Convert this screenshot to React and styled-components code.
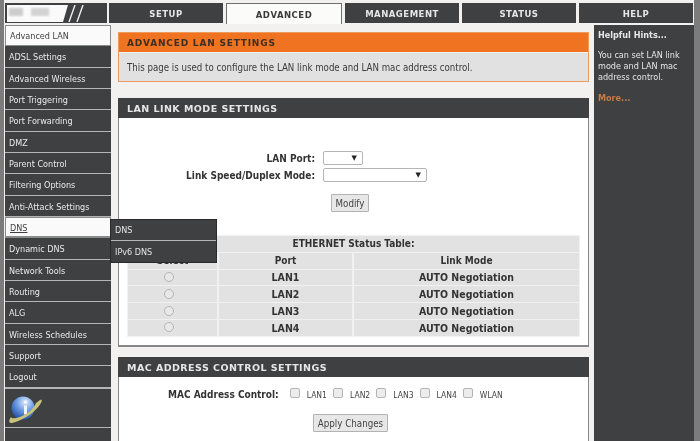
import React from 'react';
import styled, { createGlobalStyle } from 'styled-components';

const GlobalStyle = createGlobalStyle`
    html, body {
        margin: 0;
        padding: 0;
        height: 100%;
        overflow: hidden;
        background: #f3f1ef;
    }
`
const Page = styled.div`
    position: relative;
    width: 700px;
    height: 441px;
    overflow: hidden;
    box-sizing: border-box;
    padding: 3px 0 0 5px;
    background: linear-gradient(to right, #7c7c7c 4px, #f3f1ef 4px, #f3f1ef 694px, #7c7c7c 694px);
    font-family: "DejaVu Sans", Verdana, sans-serif;
    color: #2b2b2b;
    filter: blur(0.3px);
`
const TopBar = styled.div`
    display: flex;
    height: 20px;
    margin-right: 7px;
`
const Logo = styled.div`
    width: 102px;
    margin-right: 2px;
    display: flex;
    align-items: center;
    box-sizing: border-box;
    border: 2px solid #3e4041;
    border-bottom-width: 1px;
    background: #3e4041;
    overflow: hidden;
`
const LogoSvg = styled.svg`
    display: block;
`
const Tabs = styled.div`
    display: flex;
    flex: 1;
    gap: 3px;
`
const Tab = styled.div`
    flex: 1;
    display: flex;
    align-items: center;
    justify-content: center;
    box-sizing: border-box;
    height: ${p => p.$active ? '21px' : '20px'};
    padding-top: 2px;
    background: ${p => p.$active ? '#fbfbfa' : '#3e4041'};
    border: ${p => p.$active ? '1px solid #6d6f70' : 'none'};
    border-bottom: none;
    color: ${p => p.$active ? '#3a3a3a' : '#e6e6e6'};
    font-size: 8.5px;
    font-weight: bold;
    letter-spacing: 0.5px;
    position: relative;
    z-index: 1;
`
const Body = styled.div`
    display: flex;
    margin-top: 2px;
`
const Sidebar = styled.div`
    width: 106px;
    height: 416px;
    flex-shrink: 0;
    background: #3e4041;
`
const MenuItem = styled.div`
    box-sizing: border-box;
    height: 21.33px;
    display: flex;
    align-items: center;
    padding: ${p => p.$first ? '0' : '2px'} 0 0 4px;
    background: ${p => p.$active ? '#fafafa' : '#3e4041'};
    border-bottom: 1px solid #b4b6b6;
    border: ${p => p.$active ? '1px solid #8a8c8c' : undefined};
    border-bottom-width: ${p => p.$link ? '2px' : '1px'};
    color: ${p => p.$active ? '#3f3f3f' : '#e9e9e9'};
    text-decoration: ${p => p.$link ? 'underline' : 'none'};
    font-size: 9px;
    font-family: "DejaVu Sans Condensed", "DejaVu Sans", sans-serif;
    font-stretch: condensed;
    white-space: nowrap;
`
const IconSlot = styled.div`
    box-sizing: border-box;
    height: 40px;
    padding: 6px 0 0 4px;
    border-bottom: 1px solid #b4b6b6;
    border-top: 1px solid #b4b6b6;
`
const Main = styled.div`
    width: 471px;
    padding: 7px 0 0 7px;
    flex-shrink: 0;
`
const Intro = styled.div`
    box-sizing: border-box;
    height: 50px;
    border: 1px solid #ee9a5c;
    background: #e1e1e1;
`
const IntroTitle = styled.div`
    height: 19px;
    display: flex;
    align-items: center;
    padding-left: 8px;
    background: #ef7320;
    border-bottom: 1px solid #f3f1ef;
    color: #3a3026;
    font-size: 9px;
    font-weight: bold;
    letter-spacing: 0.8px;
`
const IntroText = styled.div`
    height: 29px;
    display: flex;
    align-items: center;
    padding-left: 8px;
    font-family: "DejaVu Sans Condensed", "DejaVu Sans", sans-serif;
    font-size: 9.65px;
    color: #3a3a3a;
`
const Section = styled.section`
    margin-top: ${p => p.$gap}px;
    box-sizing: border-box;
    height: ${p => p.$height}px;
    background: #fff;
    border: solid #85878a;
    border-width: 0 1px 2px 1px;
`
const SectionTitle = styled.div`
    height: 20px;
    margin: 0 -1px;
    display: flex;
    align-items: center;
    padding-left: 9px;
    background: #3e4041;
    color: #e6e6e6;
    font-size: 9.5px;
    font-weight: bold;
    letter-spacing: 0.45px;
`
const FormRows = styled.div`
    padding-top: 33px;
    display: grid;
    grid-template-columns: 196px 1fr;
    row-gap: 3px;
    align-items: center;
`
const Label = styled.div`
    justify-self: end;
    font-family: "DejaVu Sans Condensed", "DejaVu Sans", sans-serif;
    font-size: 10px;
    font-weight: bold;
    color: #333;
`
const Select = styled.div`
    box-sizing: border-box;
    margin-left: 8px;
    width: ${p => p.$width}px;
    height: 14px;
    background: #fff;
    border: 1px solid #b5b5b5;
    border-radius: 2px;
    display: flex;
    align-items: center;
    justify-content: flex-end;
    padding-right: 5px;
    color: #222;
    font-size: 7px;
`
const ButtonRow = styled.div`
    display: flex;
    justify-content: center;
    margin: ${p => p.$top}px ${p => p.$right}px 0 0;
`
const Button = styled.div`
    box-sizing: border-box;
    height: 18px;
    padding: 0 ${p => p.$pad}px;
    display: flex;
    align-items: center;
    background: #e7e7e7;
    border: 1px solid #b2b2b2;
    border-radius: 1px;
    color: #444;
    font-family: "DejaVu Sans Condensed", "DejaVu Sans", sans-serif;
    font-size: 9.7px;
`
const StatusTable = styled.div`
    margin: 23px 8px 0 8px;
    display: grid;
    grid-template-columns: 89px 133px 1fr;
    gap: 1px 2px;
    padding: 1px;
    background: #f1f1f1;
`
const Cell = styled.div`
    grid-column: ${p => p.$span ? '1 / -1' : 'auto'};
    height: 15.8px;
    display: flex;
    align-items: center;
    justify-content: center;
    background: #e2e2e2;
    color: #333;
    font-family: "DejaVu Sans Condensed", "DejaVu Sans", sans-serif;
    font-size: ${p => p.$head ? '10' : '10.5'}px;
    font-weight: bold;
`
const Radio = styled.span`
    box-sizing: border-box;
    width: 10px;
    height: 10px;
    margin: 0 7px 1px 0;
    border-radius: 50%;
    border: 1px solid #b4b4b4;
    background: #e8e8e8;
`
const MacRow = styled.div`
    display: flex;
    align-items: center;
    padding: 11px 0 0 49px;
`
const MacLabel = styled(Label)`
    margin-right: 11px;
`
const Check = styled.span`
    box-sizing: border-box;
    width: 10px;
    height: 10px;
    margin-top: -3px;
    border: 1px solid #b5b5b5;
    border-radius: 2px;
    background: #ececec;
`
const CheckText = styled.span`
    width: 26.3px;
    padding: 2px 0 0 7px;
    font-family: "DejaVu Sans Condensed", "DejaVu Sans", sans-serif;
    font-size: 8.5px;
    color: #444;
`
const Hints = styled.aside`
    box-sizing: border-box;
    width: 100px;
    height: 416px;
    margin: 0 0 0 5px;
    padding: 5px 4px;
    background: #3e4041;
    color: #e6e6e6;
    font-family: "DejaVu Sans Condensed", "DejaVu Sans", sans-serif;
    font-size: 9px;
    line-height: 11px;
`
const HintTitle = styled.div`
    font-weight: bold;
`
const HintText = styled.div`
    margin-top: 9px;
`
const HintMore = styled.div`
    margin-top: 10px;
    font-weight: bold;
    color: #c77b45;
`
const Flyout = styled.div`
    position: absolute;
    left: 110px;
    top: 219px;
    width: 107px;
    box-sizing: border-box;
    border: 1px solid #2a2a2a;
    background: #3e4041;
    z-index: 2;
`
const FlyoutItem = styled.div`
    box-sizing: border-box;
    height: 21px;
    display: flex;
    align-items: center;
    padding-left: 4px;
    border-bottom: ${p => p.$last ? 'none' : '1px solid #b4b6b6'};
    color: #e4e4e4;
    font-family: "DejaVu Sans Condensed", "DejaVu Sans", sans-serif;
    font-size: 9px;
`

const menu = ['Advanced LAN', 'ADSL Settings', 'Advanced Wireless', 'Port Triggering', 'Port Forwarding', 'DMZ', 'Parent Control', 'Filtering Options', 'Anti-Attack Settings', 'DNS', 'Dynamic DNS', 'Network Tools', 'Routing', 'ALG', 'Wireless Schedules', 'Support', 'Logout'];
const tabs = ['SETUP', 'ADVANCED', 'MANAGEMENT', 'STATUS', 'HELP'];
const ports = ['LAN1', 'LAN2', 'LAN3', 'LAN4'];
const checks = ['LAN1', 'LAN2', 'LAN3', 'LAN4', 'WLAN'];

function LogoMark() {
    return (
        <LogoSvg width="98" height="17" viewBox="0 0 98 17">
            <defs>
                <filter id="smear"><feGaussianBlur stdDeviation="1.2" /></filter>
            </defs>
            <polygon points="0,0 61,0 56,17 0,17" fill="#fafafa" />
            <rect x="2" y="3" width="14" height="8" fill="#cdcdcd" filter="url(#smear)" />
            <rect x="24" y="3" width="18" height="8" fill="#d2d2d2" filter="url(#smear)" />
            <path d="M68 0 L62 17 M76 0 L70 17" stroke="#f0f0f0" strokeWidth="1.4" />
        </LogoSvg>
    )
}

function GlobeIcon() {
    return (
        <svg width="34" height="30" viewBox="0 0 34 30">
            <defs>
                <radialGradient id="globe" cx="0.6" cy="0.25" r="0.8">
                    <stop offset="0" stopColor="#e1ecfc" />
                    <stop offset="0.45" stopColor="#6f9fe6" />
                    <stop offset="1" stopColor="#1c4aa3" />
                </radialGradient>
            </defs>
            <circle cx="14" cy="13" r="11.5" fill="url(#globe)" />
            <circle cx="16.5" cy="7" r="1.8" fill="#f2f6fd" />
            <path d="M15 10.5 h3 v9 h-3 z" fill="#f2f6fd" />
            <path d="M31 5 C34 3 33 7 30 11 C24 19 10 27 3 28 C-1 28 0 25 2 22 C3 26 22 20 27 8 Z" fill="#c9c27a" />
        </svg>
    )
}

const App = function () {
    return (
        <Page>
            <GlobalStyle />
            <TopBar>
                <Logo><LogoMark /></Logo>
                <Tabs>
                    {tabs.map(t => <Tab key={t} $active={t === 'ADVANCED'}>{t}</Tab>)}
                </Tabs>
            </TopBar>
            <Body>
                <Sidebar>
                    {menu.map((m, i) => (
                        <MenuItem key={m} $first={i === 0} $active={i === 0 || m === 'DNS'} $link={m === 'DNS'}>{m}</MenuItem>
                    ))}
                    <IconSlot><GlobeIcon /></IconSlot>
                </Sidebar>
                <Main>
                    <Intro>
                        <IntroTitle>ADVANCED LAN SETTINGS</IntroTitle>
                        <IntroText>This page is used to configure the LAN link mode and LAN mac address control.</IntroText>
                    </Intro>
                    <Section $gap={16} $height={249}>
                        <SectionTitle>LAN LINK MODE SETTINGS</SectionTitle>
                        <FormRows>
                            <Label>LAN Port:</Label>
                            <Select $width={40}>▼</Select>
                            <Label>Link Speed/Duplex Mode:</Label>
                            <Select $width={104}>▼</Select>
                        </FormRows>
                        <ButtonRow $top={12} $right={7}><Button $pad={4}>Modify</Button></ButtonRow>
                        <StatusTable>
                            <Cell $span $head>ETHERNET Status Table:</Cell>
                            <Cell $head>Select</Cell>
                            <Cell $head>Port</Cell>
                            <Cell $head>Link Mode</Cell>
                            {ports.map(p => (
                                <React.Fragment key={p}>
                                    <Cell><Radio /></Cell>
                                    <Cell>{p}</Cell>
                                    <Cell>AUTO Negotiation</Cell>
                                </React.Fragment>
                            ))}
                        </StatusTable>
                    </Section>
                    <Section $gap={10} $height={90}>
                        <SectionTitle>MAC ADDRESS CONTROL SETTINGS</SectionTitle>
                        <MacRow>
                            <MacLabel>MAC Address Control:</MacLabel>
                            {checks.map(c => (
                                <React.Fragment key={c}>
                                    <Check />
                                    <CheckText>{c}</CheckText>
                                </React.Fragment>
                            ))}
                        </MacRow>
                        <ButtonRow $top={14} $right={6}><Button $pad={4}>Apply Changes</Button></ButtonRow>
                    </Section>
                </Main>
                <Hints>
                    <HintTitle>Helpful Hints...</HintTitle>
                    <HintText>You can set LAN link mode and LAN mac address control.</HintText>
                    <HintMore>More...</HintMore>
                </Hints>
            </Body>
            <Flyout>
                <FlyoutItem>DNS</FlyoutItem>
                <FlyoutItem $last>IPv6 DNS</FlyoutItem>
            </Flyout>
        </Page>
    )
}

export default App
